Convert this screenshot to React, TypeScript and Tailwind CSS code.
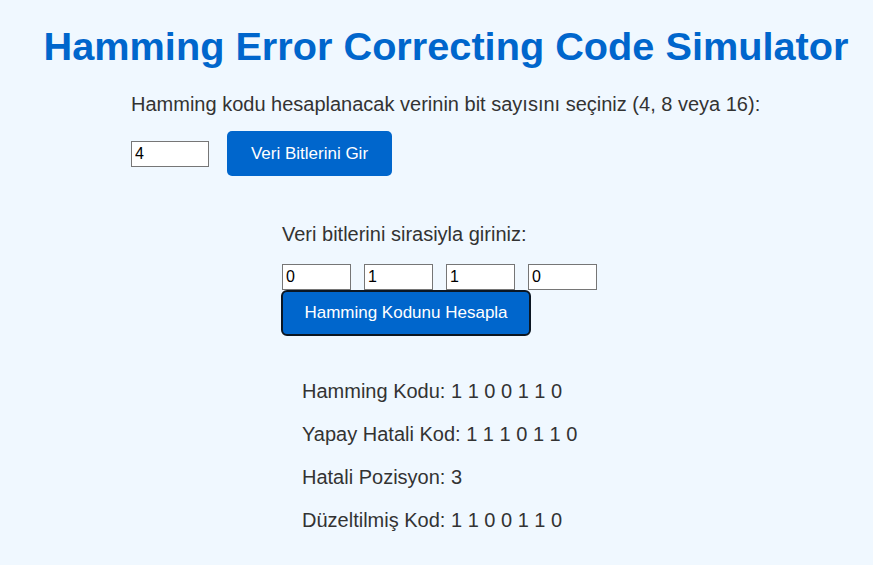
import { useState } from "react";

const font = "font-['Liberation_Sans',Arial,sans-serif]";

export default function App() {
  const [bitCount, setBitCount] = useState("4");
  const [bits, setBits] = useState(["0", "1", "1", "0"]);

  const results = [
    { label: "Hamming Kodu", value: "1 1 0 0 1 1 0" },
    { label: "Yapay Hatali Kod", value: "1 1 1 0 1 1 0" },
    { label: "Hatali Pozisyon", value: "3" },
    { label: "Düzeltilmiş Kod", value: "1 1 0 0 1 1 0" },
  ];

  return (
    <div className={`min-h-screen bg-[#f0f8ff] text-[#333] ${font}`}>
      {/* Title */}
      <h1 className="pt-[23px] pl-[19px] text-center text-[39.7px] leading-[46px] font-bold text-[#0066cc]">
        Hamming Error Correcting Code Simulator
      </h1>

      {/* Bit count */}
      <div className="mt-[24px] pl-[131px]">
        <p className="text-[20px] leading-[23px]">
          Hamming kodu hesaplanacak verinin bit sayısını seçiniz (4, 8 veya 16):
        </p>
        <div className="mt-[15px] flex items-center gap-[18px]">
          <input
            value={bitCount}
            onChange={(e) => setBitCount(e.target.value)}
            className="h-[26px] w-[78px] border border-[#767676] bg-white px-[3px] text-[16px] text-black outline-none"
          />
          <button className="h-[45px] w-[165px] rounded-[5px] bg-[#0066cc] text-[17px] text-white">
            Veri Bitlerini Gir
          </button>
        </div>
      </div>

      {/* Data bits */}
      <div className="mt-[47px] pl-[282px]">
        <p className="text-[20px] leading-[23px]">Veri bitlerini sirasiyla giriniz:</p>
        <div className="mt-[18px] flex gap-[13px]">
          {bits.map((b, i) => (
            <input
              key={i}
              value={b}
              onChange={(e) => {
                const next = [...bits];
                next[i] = e.target.value;
                setBits(next);
              }}
              className="h-[26px] w-[69px] border border-[#767676] bg-white px-[3px] text-[16px] text-black outline-none"
            />
          ))}
        </div>
        <button className="h-[46px] w-[250px] -ml-px rounded-[6px] border-2 border-[#0b1622] bg-[#0066cc] text-[17px] text-white">
          Hamming Kodunu Hesapla
        </button>
      </div>

      {/* Results */}
      <div className="mt-[44px] flex flex-col gap-[20px] pl-[302px] pb-[20px]">
        {results.map((r) => (
          <p key={r.label} className="text-[20px] leading-[23px]">
            {r.label}: {r.value}
          </p>
        ))}
      </div>
    </div>
  );
}
